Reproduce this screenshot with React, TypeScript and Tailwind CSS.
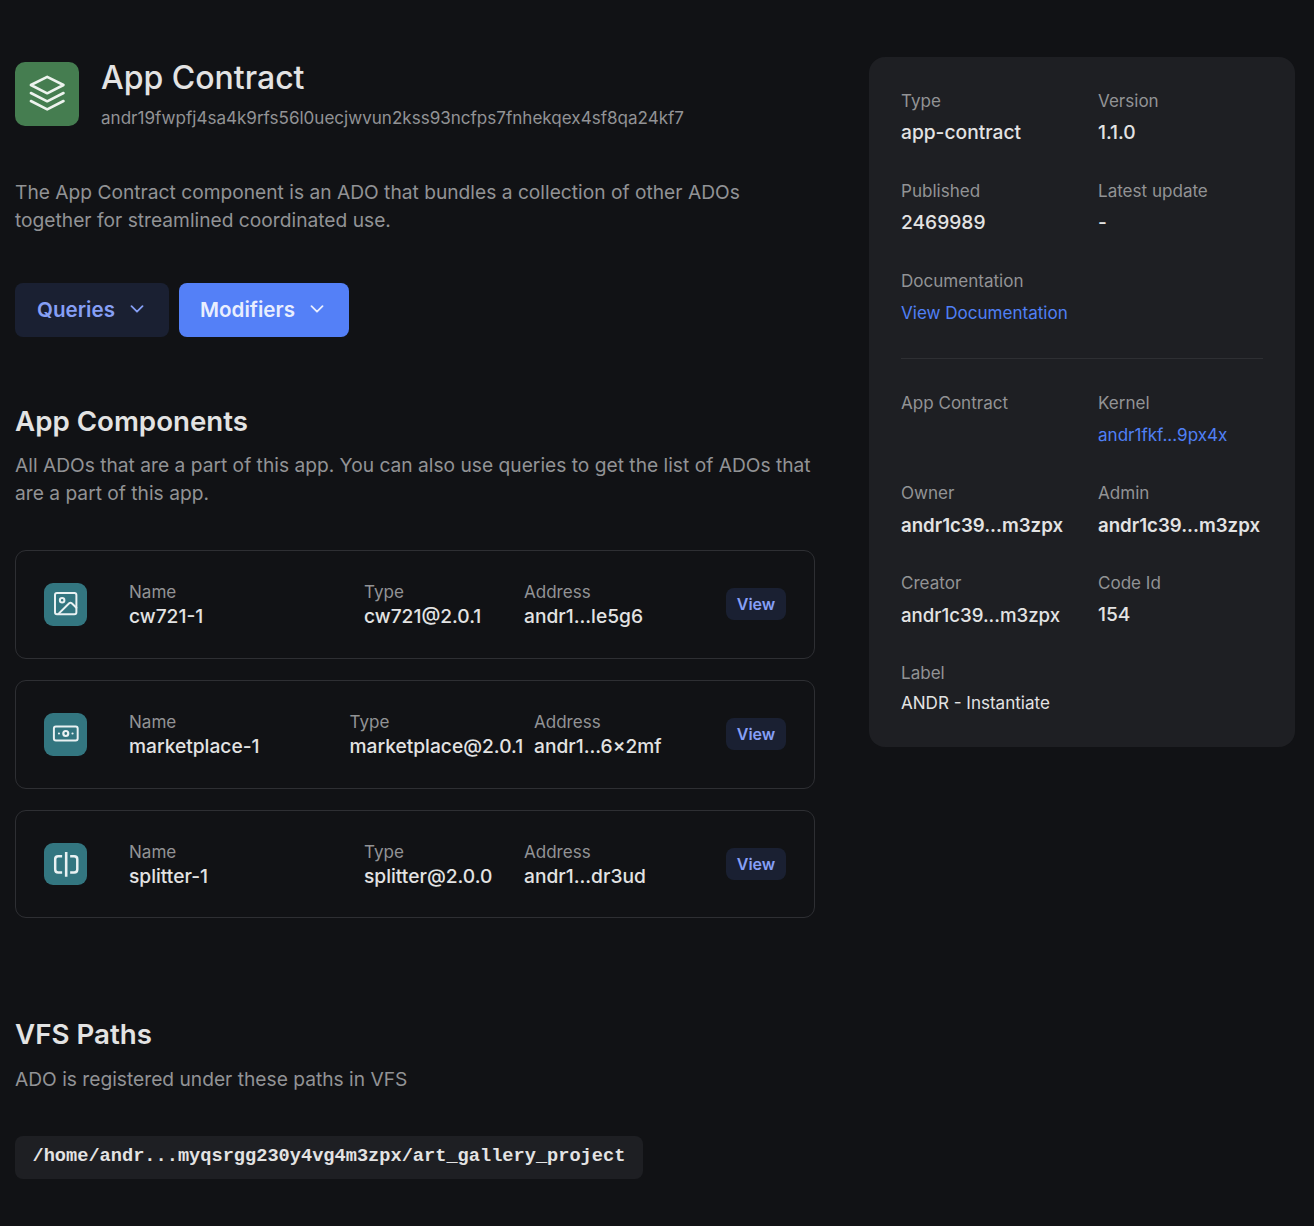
import type { ReactNode } from 'react';

function LayersIcon() {
  return (
    <svg viewBox="0 0 64 64" className="size-16" fill="none" stroke="currentColor" strokeWidth="2.6" strokeLinecap="round" strokeLinejoin="round">
      <path d="M32.2 14.9 48.5 23 32.2 31.3 15.9 23Z" />
      <path d="M15.9 31 32.2 39.3 48.5 31" />
      <path d="M15.9 39 32.2 47.4 48.5 39" />
    </svg>
  );
}

function ImageIcon() {
  return (
    <svg viewBox="0 0 43 43" className="size-full" fill="none" stroke="currentColor" strokeWidth="2" strokeLinecap="round" strokeLinejoin="round">
      <rect x="11.1" y="10.2" width="21.6" height="21.4" rx="2" />
      <circle cx="18.3" cy="17.4" r="2.3" />
      <path d="M14.6 31.2 25.4 20.4Q26.7 19.3 28 20.4L32.7 25" />
    </svg>
  );
}

function BanknoteIcon() {
  return (
    <svg viewBox="0 0 43 43" className="size-full" fill="none" stroke="currentColor" strokeWidth="2">
      <rect x="10" y="13.7" width="24" height="14" rx="2" />
      <circle cx="22" cy="20.7" r="2.5" strokeWidth="2.2" />
      <circle cx="15.1" cy="20.7" r="1.1" fill="currentColor" stroke="none" />
      <circle cx="28.8" cy="20.7" r="1.1" fill="currentColor" stroke="none" />
    </svg>
  );
}

function SplitIcon() {
  return (
    <svg viewBox="0 0 43 43" className="size-full" fill="none" stroke="currentColor" strokeWidth="2.5">
      <path d="M18.3 13.3H14.3Q11.3 13.3 11.3 16.3V26.8Q11.3 29.8 14.3 29.8H18.3" />
      <path d="M26.4 13.3H30.4Q33.6 13.3 33.6 16.3V26.8Q33.6 29.8 30.4 29.8H26.4" />
      <path d="M22.4 9V34" strokeWidth="2.6" />
    </svg>
  );
}

function Chevron() {
  return (
    <svg viewBox="0 0 14 8" className="mb-0.5 h-2 w-3.5" fill="none" stroke="currentColor" strokeWidth="1.8" strokeLinecap="round" strokeLinejoin="round">
      <path d="M1.5 1.2 7 6.7 12.5 1.2" />
    </svg>
  );
}

function ComponentRow({ icon, name, type, address, columns }: { icon: ReactNode; name: string; type: string; address: string; columns: string }) {
  return (
    <div className="flex h-[108.6px] items-center rounded-[11px] border border-[#2e2f33] px-7">
      <div className="mr-[42.4px] size-[42.6px] shrink-0 overflow-hidden rounded-[9px] bg-[#337680] text-[#e9f1f2]">{icon}</div>
      <div className={columns}>
        {[['Name', name], ['Type', type], ['Address', address]].map(([label, value]) => (
          <div key={label} className="whitespace-nowrap leading-6">
            <p className="text-[17.06px] text-[#929395]">{label}</p>
            <p className="text-[19.2px] font-medium">{value}</p>
          </div>
        ))}
      </div>
      <button className="h-8 w-[60px] shrink-0 rounded-lg bg-[#1a2032] text-[16px] font-semibold text-[#869ff5]">View</button>
    </div>
  );
}

const strong = 'mt-[5px] text-[19.2px] font-medium leading-7';
const link = 'mt-1.5 text-[17.06px] leading-7 text-[#5080f5]';

function Field({ label, value, valueClass = strong }: { label: string; value?: string; valueClass?: string }) {
  return (
    <div className="whitespace-nowrap">
      <p className="text-[17.06px] leading-6 text-[#929395]">{label}</p>
      {value && <p className={valueClass}>{value}</p>}
    </div>
  );
}

export default function App() {
  return (
    <div className="flex h-[1226px] w-[1314px] items-start overflow-hidden bg-[#111215] font-['Inter',sans-serif] text-[#e3e3e3]">
      <main className="ml-[15px] w-[800px] pt-[62px]">
        <header className="flex h-16 gap-[22px]">
          <div className="size-16 shrink-0 rounded-[10px] bg-[#457d50] text-[#edf3ee]">
            <LayersIcon />
          </div>
          <div className="-mt-1">
            <h1 className="text-[32px] font-medium leading-10">App Contract</h1>
            <p className="mt-2 text-[17.06px] leading-6 text-[#929395]">andr19fwpfj4sa4k9rfs56l0uecjwvun2kss93ncfps7fnhekqex4sf8qa24kf7</p>
          </div>
        </header>

        <p className="mt-[52px] w-[740px] text-[19.2px] leading-7 text-[#929395]">
          The App Contract component is an ADO that bundles a collection of other ADOs together for streamlined coordinated use.
        </p>

        <div className="mt-[49px] flex gap-2.5">
          <button className="flex h-[54px] w-[154px] items-center gap-[15px] rounded-lg bg-[#1a2032] pl-[22px] text-[20.6px] font-semibold text-[#869ff5]">
            Queries
            <Chevron />
          </button>
          <button className="flex h-[54px] w-[170px] items-center gap-[15px] rounded-lg bg-[#5480f7] pl-[21px] text-[20.6px] font-semibold text-[#e9eefe]">
            Modifiers
            <Chevron />
          </button>
        </div>

        <section className="mt-[66px]">
          <h2 className="text-[27.7px] font-semibold leading-9">App Components</h2>
          <p className="mt-3 text-[19.2px] leading-7 text-[#929395]">
            All ADOs that are a part of this app. You can also use queries to get the list of ADOs that are a part of this app.
          </p>
          <div className="mt-[43.2px] flex flex-col gap-[21.2px]">
            <ComponentRow icon={<ImageIcon />} name="cw721-1" type="cw721@2.0.1" address="andr1...le5g6" columns="grid flex-1 grid-cols-[235px_160px_1fr]" />
            <ComponentRow icon={<BanknoteIcon />} name="marketplace-1" type="marketplace@2.0.1" address="andr1...6x2mf" columns="grid flex-1 grid-cols-[220.5px_184.5px_1fr]" />
            <ComponentRow icon={<SplitIcon />} name="splitter-1" type="splitter@2.0.0" address="andr1...dr3ud" columns="grid flex-1 grid-cols-[235px_160px_1fr]" />
          </div>
        </section>

        <section className="mt-[97.6px]">
          <h2 className="text-[27.7px] font-semibold leading-9">VFS Paths</h2>
          <p className="mt-[13px] text-[19.2px] leading-7 text-[#929395]">ADO is registered under these paths in VFS</p>
          <div className="mt-[43px] flex h-[43px] w-[628px] items-center rounded-lg bg-[#1e1f23] pl-[17.5px] font-['Liberation_Mono',monospace] text-[18.65px] font-semibold">
            /home/andr...myqsrgg230y4vg4m3zpx/art_gallery_project
          </div>
        </section>
      </main>

      <aside className="ml-[54px] mt-[57px] h-[690px] w-[426px] rounded-2xl bg-[#1e1f23] px-8 pt-8">
        <div className="grid h-[269px] auto-rows-[89.8px] grid-cols-[197px_1fr]">
          <Field label="Type" value="app-contract" />
          <Field label="Version" value="1.1.0" />
          <Field label="Published" value="2469989" />
          <Field label="Latest update" value="-" />
          <Field label="Documentation" value="View Documentation" valueClass={link} />
        </div>
        <hr className="border-[#2e2f33]" />
        <div className="mt-8 grid auto-rows-[90px] grid-cols-[197px_1fr]">
          <Field label="App Contract" />
          <Field label="Kernel" value="andr1fkf...9px4x" valueClass={link} />
          <Field label="Owner" value="andr1c39...m3zpx" valueClass="mt-[5.5px] text-[18.65px] font-semibold leading-7" />
          <Field label="Admin" value="andr1c39...m3zpx" valueClass="mt-[5.5px] text-[18.65px] font-semibold leading-7" />
          <Field label="Creator" value="andr1c39...m3zpx" valueClass="mt-1.5 text-[18.65px] font-medium leading-7" />
          <Field label="Code Id" value="154" />
          <Field label="Label" value="ANDR - Instantiate" valueClass="mt-1 text-[17.06px] leading-7" />
        </div>
      </aside>
    </div>
  );
}
